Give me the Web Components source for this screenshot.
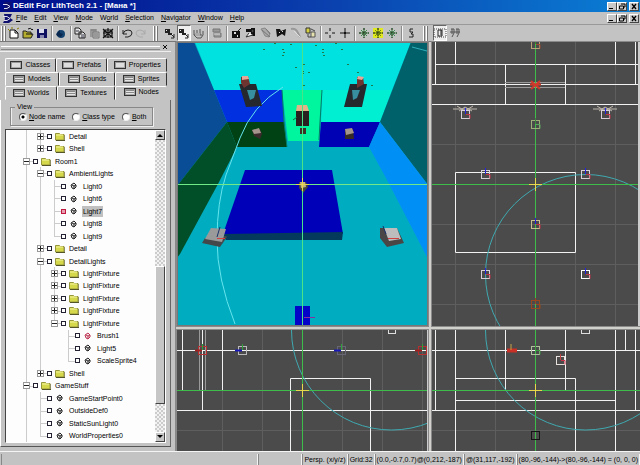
<!DOCTYPE html>
<html lang="en">
<head>
<meta charset="utf-8">
<title>DEdit For LithTech 2.1</title>
<style>
html,body{margin:0;height:100%}
body{font:7px/10px "Liberation Sans",Arial,sans-serif;color:#000;background:#c3c3c3;overflow:hidden}
</style>
</head>
<body>
<dedit-app></dedit-app>
<script>
const BASE = `:host,*{box-sizing:border-box}button{font:inherit;color:inherit;margin:0;padding:0;border:0;background:none}u{text-underline-offset:1px}svg{display:block}`;
function define(name, render) {
  customElements.define(name, class extends HTMLElement {
    constructor() { super(); this.attachShadow({ mode: 'open' }); }
    connectedCallback() { this.shadowRoot.innerHTML = render(this); }
  });
}
const RAISED = 'border:1px solid;border-color:#fff #444 #444 #fff;';
const LOGO = `<svg width="10" height="9" viewBox="0 0 10 9"><path fill="#10106e" d="M1 0h8L7 4l3 2-4 3H0l2-4z"/><path stroke="#dde" d="M0 2.500h4l3 2-3 2H1" fill="none"/></svg>`;

define('window-buttons', () => `<style>${BASE}
:host{display:flex;margin-left:auto}
button{width:10px;height:9px;background:#c8c8c8;${RAISED}display:grid;place-items:center}
button:last-child{margin-left:2px}</style>
<button aria-label="Minimize"><svg width="8" height="7"><path d="M1 5.500h4" stroke="#000"/></svg></button>
<button aria-label="Restore"><svg width="8" height="7"><path d="M3 1h4v3H6M1.500 3h4v3h-4z" fill="none" stroke="#000"/></svg></button>
<button aria-label="Close"><svg width="8" height="7"><path d="M2 1l4 5M6 1L2 6" stroke="#000" stroke-width="1.300"/></svg></button>`);

define('title-bar', () => `<style>${BASE}
:host{display:flex;align-items:center;height:12px;padding:0 1px 0 3px;background:linear-gradient(90deg,#000d8c,#0a3fae 50%,#0a7fd4);color:#fff;font-weight:bold}
h1{font:bold 8px/12px "Liberation Sans",Arial,sans-serif;margin:0;white-space:nowrap}</style>
${LOGO}<h1><slot></slot></h1><window-buttons></window-buttons>`);

define('menu-bar', () => `<style>${BASE}
:host{display:flex;align-items:center;height:13px;padding:0 1px 0 3px;border-bottom:1px solid #999}
nav{display:flex;gap:7px;margin-left:3px}</style>${LOGO}
<nav>${['_File','_Edit','_View','_Mode','W_orld','_Selection','_Navigator','_Window','_Help'].map(t => `<button>${t.replace(/_(.)/, '<u>$1</u>')}</button>`).join('')}</nav>
<window-buttons></window-buttons>`);

const star = c => `<path d="M7 2v10M2 7h10M4 4l6 6M10 4l-6 6" stroke="${c}"/><path d="M7 2v10M2 7h10" stroke="#243018" stroke-dasharray="2 1"/>`;
const ICONS = {
  new: '<path d="M3 4h5l3 3v5H3z" fill="#fff" stroke="#111"/><path d="M8 4v3h3" fill="none" stroke="#111"/><path d="M1 3l2 2M5 1v2M10 3l2-1" stroke="#887c00"/>',
  open: '<path d="M2 12V5h3l1 1h4v2h2l-2 4z" fill="#b5ad30" stroke="#222"/><path d="M7 3q3-2 4 1l1-1M5 8h6" fill="none" stroke="#111"/>',
  save: '<path d="M2 3h10v9H2z" fill="#101060"/><path d="M4 3h5v4H4z" fill="#d9dbe8"/><path d="M5 9h4v3H5z" fill="#8888b0"/>',
  world: '<circle cx="7" cy="8" r="4" fill="#164470"/><path d="M2 8l4-4v3l3 1-2 3-4-1z" fill="#092850"/>',
  copy: '<path d="M2 2h4l2 2v4H2zM6 6h4l2 2v4H6z" fill="#e4e4e4" stroke="#222"/><path d="M3 5h3M8 9h3M8 11h3" stroke="#334"/>',
  paste: '<path d="M3 3h7v8H3z" fill="#999"/><path d="M6 6h6v6H6z" fill="#bbb" stroke="#777"/><path d="M7 8h4M7 10h4M4 4h5" stroke="#777"/>',
  del: '<path d="M2 3l10 9M12 3L2 12M7 2v10M2 7h10M3 4h8v7H3z" stroke="#111" stroke-width="1.200" fill="none"/>',
  undo: '<path d="M3 4v4h4M3 8q1-4 5-4t4 3-4 4H5" fill="none" stroke="#222"/>',
  redo: '<path d="M11 4v4H7M11 8q-1-4-5-4t-4 3 4 4h3" fill="none" stroke="#aaa"/>',
  pick: '<path d="M2 3h5v4H2zM5 7h4v2H5z" fill="#222"/><path d="M3 4h1v1H3zM9 8h1v1H9z" fill="#eee"/><path d="M7 7l4 4M11 8v4H8" stroke="#222" fill="none"/>',
  vertex: '<path d="M3 4v5l3 3h4l2-3V5M6 4v5M9 3v6M3 9h8" stroke="#555" fill="none"/><path d="M4 7h5v3H4z" fill="#aaa"/>',
  gray: '<path d="M3 3h7v3H3zM4 7h7v4H4z" fill="#999" stroke="#777"/><path d="M4 8h6" stroke="#ddd"/>',
  camera: '<path d="M3 5h8v7H3z" fill="#111"/><path d="M5 6h2v2H5zM8 9h1v2H8z" fill="#ddd"/><path d="M9 5l3-3" stroke="#222"/>',
  cube: '<path d="M2 3h5v3H2zM7 2h4v8H7z" fill="#111"/><path d="M5 7l-3 4 7-2M8 4h1v2H8z" fill="#fff" stroke="#333"/>',
  ghost: '<path d="M2 3l4-1 5 5-1 4-4-1-2-4z" fill="#aaa" stroke="#888"/><path d="M3 4l8 7M7 3l4 5" stroke="#777"/>',
  flip: '<path d="M2 3h4l1 2 5-2-1 7-3-2-5 3z" fill="#151515"/><path d="M5 6h1v1H5zM8 5h1v1H8z" fill="#ddd"/>',
  link: '<path d="M2 3q5-1 7 4l2 4" fill="none" stroke="#999" stroke-width="2"/><path d="M5 5l6 6" stroke="#ddd"/>',
  group: '<path d="M2 2h4v5H2z" fill="#d5d040" stroke="#333"/><path d="M7 6h4v5H7z" fill="#e5e2b0" stroke="#555"/><path d="M7 3l4 2M4 8v3h3" stroke="#444" fill="none"/>',
  cross: '<path d="M7 2v3M7 9v3M2 7h3M9 7h3" stroke="#111"/>',
  plus: '<path d="M7 2v10M2 7h10" stroke="#111"/><path d="M6 6h2v2H6z" fill="#111"/>',
  star1: star('#3c8c50'),
  star2: '<path d="M2 2h10v10H2z" fill="#e0e820"/>' + star('#718a10'),
  star3: star('#429558'),
  bolt: '<path d="M9 3H6v3h3L7 8h2v3H5" stroke="#222" fill="none"/>',
  gridA: '<path d="M1 3h12v8H1z" fill="none" stroke="#444" stroke-dasharray="1 1"/><path d="M5 4h4v6H5z" fill="none" stroke="#222"/><path d="M8 4v5" stroke="#222"/>',
  gridB: '<path d="M3 3h3v4l-2 4M8 3h3v4l-2 4M2 6h10M4 3v5M9 3v5" fill="none" stroke="#555"/>'
};
define('tool-button', el => `<style>${BASE}
:host{display:block}
button{display:grid;place-items:center;width:14px;height:16px}
button.on{background:#eee;border:1px solid;border-color:#666 #fff #fff #666}
svg{overflow:visible;flex:none}</style>
<button class="${el.hasAttribute('on') ? 'on' : ''}" aria-label="${el.getAttribute('icon')}"><svg width="12" height="12" viewBox="1 1 12 12">${ICONS[el.getAttribute('icon')]}</svg></button>`);
define('tool-sep', () => `<style>${BASE}:host{display:block;width:2px;height:15px;margin:0 1px 0 2px;border-left:1px solid #8b8b8b;border-right:1px solid #f5f5f5}</style>`);
define('tool-grip', () => `<style>${BASE}:host{display:flex;gap:1px;padding:0 2px}i{width:2px;height:15px;border-left:1px solid #fff;border-right:1px solid #777}</style><i></i><i></i>`);
define('tool-group', () => `<style>:host{display:flex;align-items:center}:host([wide]){gap:1px}</style><slot></slot>`);
define('tool-bar', () => {
  const g = (names, wide = '') => `<tool-group ${wide}>${names.split(' ').map(n => `<tool-button icon="${n.replace('*', '')}" ${n.includes('*') ? 'on' : ''}></tool-button>`).join('')}</tool-group>`;
  const s = '<tool-sep></tool-sep>', r = '<tool-grip></tool-grip>';
  return `<style>${BASE}:host{display:flex;align-items:center;height:17px;padding-left:1px;border-bottom:1px solid #777}
tool-grip{margin:0 3px}tool-grip:first-of-type{margin:0 -1px 0 -2px}</style>
${r}${g('new open save')}${s}${g('world')}${s}${g('copy paste del')}${s}${g('undo redo')}${r}${g('pick pick* vertex')}${s}${g('gray')}${s}${g('camera cube ghost flip link group', 'wide')}${s}${g('cross plus', 'wide')}${s}${g('star1 star2 star3')}${s}${g('bolt')}${r}${g('gridA* gridB', 'wide')}`;
});

define('panel-tab', el => `<style>${BASE}
:host{display:flex;flex-basis:0}
button{flex:1;display:flex;align-items:center;justify-content:center;gap:3px;height:14px;border:1px solid;border-color:#fff #333 transparent #fff;border-radius:2px 2px 0 0}
:host([selected]) button{padding-bottom:2px;border-right-color:transparent}
i{width:12px;height:8px;border:1px solid #333;background:#ddd;box-shadow:inset 1px 1px #999,inset -1px -1px #aaa}
i.lines{background:repeating-linear-gradient(#e5e5e5 0 1px,#888 1px 2px)}</style>
<button role="tab" aria-selected="${el.hasAttribute('selected')}"><i class="${el.hasAttribute('lines') ? 'lines' : ''}"></i><span><slot></slot></span></button>`);

define('tree-row', el => {
  const lvl = +el.getAttribute('level'), kind = el.getAttribute('kind'), guides = el.getAttribute('guides');
  let cols = '';
  for (let i = 0; i < lvl; i++) {
    const last = i === lvl - 1;
    const box = last && kind !== 'leaf' ? `<b>${kind === 'open' ? '' : '<s></s>'}</b>` : '';
    cols += `<i class="${guides[i] === '|' ? 'v' : guides[i] === 'L' ? 'v half' : ''} ${last ? 'h' : ''}">${box}</i>`;
  }
  const hot = el.hasAttribute('hot') ? '#c03050' : '#222';
  const icon = kind === 'leaf'
    ? `<svg width="8" height="8" viewBox="0 0 8 8"><path d="M1 3l3-2 2 2v2L4 7 2 6z" fill="#eee" stroke="${hot}"/><path d="M2 3l2 1 2-1M4 4v3" stroke="${hot}" fill="none"/></svg>`
    : `<svg width="10" height="9" viewBox="0 0 10 9"><path d="M.5 8V1.500h4l1 1h3.500V8z" fill="#d5d84b" stroke="#96963a"/><path d="M1 8.500h9V3" fill="none" stroke="#55552a"/><path d="M1 3h7" stroke="#f4f5a0"/></svg>`;
  return `<style>${BASE}
:host{display:flex;align-items:center;min-height:0;white-space:nowrap}
i{width:14px;align-self:stretch;display:grid;place-items:center;background-repeat:no-repeat}
.v{background-image:linear-gradient(#ccc,#ccc);background-size:1px 100%;background-position:7px 0}
.half{background-size:1px 50%}
.h{background-image:linear-gradient(#ccc,#ccc),linear-gradient(#ccc,#ccc);background-size:1px 100%,7px 1px;background-position:7px 0,7px 6px}
.h.half{background-size:1px 50%,7px 1px}
b{width:7px;height:7px;border:1px solid #999;background:linear-gradient(#222,#222) center/5px 1px no-repeat #fff;display:grid;place-items:center}
s{width:1px;height:5px;background:#222}
input{appearance:none;margin:0 ${kind === 'leaf' ? 4 : 3}px 0 0;width:5px;height:5px;border:1px solid ${el.hasAttribute('sel') ? '#c01840' : '#223'};background:${el.hasAttribute('sel') ? '#e8a0b0' : '#fff'}}
label{display:flex;align-items:center}
span{margin-left:${kind === 'leaf' ? 4 : 3}px;padding:0 1px;line-height:11px}
:host([sel]) span{background:#c0c0c0}</style>
${cols}<label><input type="checkbox">${icon}<span><slot></slot></span></label>`;
});

/* level, kind, guide columns (| through, L last child, space none), label, flags */
const ROWS = [
  [2,'shut','||','Detail'],[2,'shut','|L','Shell'],[1,'open','|','Room1'],[2,'open','||','AmbientLights'],
  [3,'leaf','|||','Light0'],[3,'leaf','|||','Light6'],[3,'leaf','|||','Light7','sel'],[3,'leaf','|||','Light8'],[3,'leaf','||L','Light9'],
  [2,'shut','||','Detail'],[2,'open','||','DetailLights'],
  [3,'shut','|||','LightFixture'],[3,'shut','|||','LightFixture'],[3,'shut','|||','LightFixture'],[3,'shut','|||','LightFixture'],[3,'open','||L','LightFixture'],
  [4,'leaf','|| |','Brush1','hot'],[4,'leaf','|| |','Light5'],[4,'leaf','|| L','ScaleSprite4'],
  [2,'shut','|L','Shell'],[1,'open','|','GameStuff'],
  [2,'leaf','||','GameStartPoint0'],[2,'leaf','||','OutsideDef0'],[2,'leaf','||','StaticSunLight0'],[2,'leaf','|L','WorldProperties0']
];
define('node-tree', () => `<style>${BASE}
:host{display:flex;min-height:0;border:1px solid;border-color:#444 #fff #fff #444;background:#fdfdfd}
.rows{flex:1;display:grid;grid-auto-rows:minmax(0,1fr);padding-left:13px;min-width:0;overflow:hidden}
.bar{width:10px;display:flex;flex-direction:column;background:repeating-conic-gradient(#ccc 0 25%,#f2f2f2 0 50%) 0 0/4px 4px}
.bar button{height:10px;background:#c6c6c6;${RAISED}display:grid;place-items:center}
.thumb{flex:138;background:#c6c6c6;${RAISED}}</style>
<div class="rows">${ROWS.map(([l, k, g, t, f]) => `<tree-row level="${l}" kind="${k}" guides="${g}" ${f || ''}>${t}</tree-row>`).join('')}</div>
<div class="bar"><button aria-label="Scroll up"><svg width="6" height="4"><path d="M0 4l3-3 3 3z"/></svg></button><span style="flex:127"></span><div class="thumb"></div><span style="flex:28"></span><button aria-label="Scroll down"><svg width="6" height="4"><path d="M0 0l3 3 3-3z"/></svg></button></div>`);

define('view-options', () => `<style>${BASE}
:host{display:block}
fieldset{margin:0;padding:0 6px 0 8px;height:23px;display:flex;gap:7px;border:1px solid #888;box-shadow:inset 1px 0 #eee,1px 1px #eee}
legend{padding:0 2px;line-height:8px;margin-left:-4px}
label{display:flex;align-items:center;gap:2px;height:12px;white-space:nowrap}
input{appearance:none;margin:0;width:8px;height:8px;border-radius:50%;border:1px solid;border-color:#555 #eee #eee #555;background:#fff}
input:checked{background:radial-gradient(circle,#000 0 1px,#fff 2px)}</style>
<fieldset><legend>View</legend>
<label><input type="radio" name="v" checked><span><u>N</u>ode name</span></label>
<label><input type="radio" name="v"><span><u>C</u>lass type</span></label>
<label><input type="radio" name="v"><span><u>B</u>oth</span></label></fieldset>`);

define('side-panel', () => `<style>${BASE}
:host{display:flex;flex-direction:column;min-height:0;padding:2px 4px 4px 0;border-right:1px solid #888;background:#c3c3c3}
.head{display:flex;align-items:center;gap:2px;height:7px;padding:0 3px 0 1px}
.head div{flex:1;height:4px;border-top:1px solid #fff;border-bottom:1px solid #888}
.head button{display:grid;place-items:center;width:6px;height:6px}
.tabs{padding:6px 4px 0 5px;border-top:1px solid #eee}
.row{display:flex}
.page{flex:1;min-height:0;display:flex;flex-direction:column;padding:3px 4px 3px 4px;border-left:1px solid #fff;border-right:1px solid #666;border-bottom:1px solid #555}
view-options{margin:0 22px 3px 5px}
node-tree{flex:1}</style>
<div class="head"><div></div><button aria-label="Close panel"><svg width="5" height="5"><path d="M0 0l4 4M4 0L0 4" stroke="#111"/></svg></button></div>
<div class="tabs" role="tablist">
<div class="row"><panel-tab style="flex-grow:51">Classes</panel-tab><panel-tab style="flex-grow:52">Prefabs</panel-tab><panel-tab style="flex-grow:60">Properties</panel-tab></div>
<div class="row"><panel-tab lines style="flex-grow:54">Models</panel-tab><panel-tab lines style="flex-grow:57">Sounds</panel-tab><panel-tab lines style="flex-grow:52">Sprites</panel-tab></div>
<div class="row"><panel-tab lines style="flex-grow:52">Worlds</panel-tab><panel-tab lines style="flex-grow:59">Textures</panel-tab><panel-tab lines selected style="flex-grow:52">Nodes</panel-tab></div></div>
<div class="page"><view-options></view-options><node-tree></node-tree></div>`);

const poly = (p, f) => `<polygon points="${p}" fill="${f}"/>`;
const path = (d, c, w = 1) => `<path d="${d}" stroke="${c}" stroke-width="${w}" fill="none"/>`;
const G = '#3ebd4b', W = '#f2f2f2', C = '#3fa9b0', F = '#5e5e5e';
/* object marker: a square with coloured axis ticks */
const mark = (x, y, c = '#d8d0d8', v = '#2222e0', h = '#c83048') =>
  `<rect x="${x - 3.5}" y="${y - 3.5}" width="8" height="8" fill="none" stroke="${c}"/>` + path(`M${x + .5} ${y}v-6`, v) + path(`M${x + 1} ${y + .5}h4v4`, h);
const side = (x, y, c = '#bbb', b = '#1818b8') => `<rect x="${x - 3.5}" y="${y - 3.5}" width="8" height="8" fill="none" stroke="${c}"/>` + path(`M${x} ${y + .5}h-7`, b, 2) + path(`M${x + .5} ${y}v-6`, '#2da23a');
const aim = (x, y) => path(`M${x - 6} ${y + .5}h13M${x + .5} ${y - 6}v13`, '#e8d84c');
const SCENES = {
  persp: ['177 42 251 284',
    `<rect x="177" y="42" width="251" height="284" fill="#00adc0"/>` +
    poly('195,42 411,42 392,90 214,90', '#00e2df') + poly('177,42 194,42 214,90 227,122 177,186', '#084d95') +
    poly('227,122 237,147 218,184 180,254 177,258 177,186', '#004f28') +
    poly('214,90 282,90 284,122 227,122', '#0030df') + poly('227,122 284,122 287,147 237,147', '#004213') +
    poly('282,90 322,90 319,141 288,141', '#00f59f') + poly('322,90 392,90 380,122 321,122', '#00efd3') +
    poly('321,122 380,122 369,147 319,147', '#0000b5') + poly('411,42 428,42 428,185 380,122', '#00616b') +
    poly('380,122 428,185 428,259 387,180 369,147', '#0090f5') +
    path('M282 90l2 32 3 25M322 90l-2 32-1 18', '#007d68') +
    poly('245,170 332,170 343,234 223,234', '#0000b8') + poly('223,234 343,232 342,240 226,240', '#043a5c') +
    path('M283 87Q252 106 240 138L226 175Q217 202 217 240T235 324', '#66e4ee') + path('M412 47l15 4', '#30b0bb') +
    poly('239,84 256,84 262,106 246,107', '#25282c') + poly('241,77 248,76 250,84 244,88 241,83', '#6d3430') + poly('242,76 248,76 249,79 242,80', '#e6a798') + poly('247,90 256,90 254,98 250,100', '#378e9e') +
    poly('350,84 367,84 362,107 344,107', '#25282c') + poly('357,77 363,77 364,84 357,88', '#6d3430') + poly('358,76 364,77 362,80 357,79', '#e6a798') + poly('352,90 360,90 357,98 353,100', '#378e9e') +
    poly('297,105 307,105 309,111 296,111', '#e3b488') + poly('296,111 309,111 309,126 296,126', '#29211f') + poly('300,128 306,128 306,134 300,134', '#3b3326') + path('M293 120l4-3', '#164') +
    poly('252,130 260,129 262,134 260,139 254,136', '#3b2a2c') + poly('252,130 259,128 261,133 254,134', '#a3948c') +
    poly('345,129 353,129 354,139 345,139', '#372b26') + poly('345,129 352,128 354,133 346,135', '#a3948c') +
    poly('202,243 205,238 226,236 227,237 220,247', '#44484a') + poly('205,239 211,228 226,229 222,242', '#9a9a9a') + path('M217 238.500h8', '#d04040') + path('M217 237l3-10', '#18306b') +
    poly('380,228 397,228 404,243 387,247 380,238', '#4a4646') + poly('384,228 397,228 401,239 389,241', '#bdbdbd') + path('M388 238.500h11', '#d04040') + path('M386 234l-3-8', '#18306b') +
    `<rect x="295" y="306" width="15" height="20" fill="#0404c8"/>` + path('M304 317.500h11', '#8a2ea0') +
    poly('299,182 306,182 308,187 303,193 299,188', '#4b4a38') + poly('300,182 305,182 306,187 301,188', '#c8b480') +
    [[263,49],[274,43],[282,49],[283,52],[282,55],[322,49],[322,52],[323,55],[335,43],[341,49],[303,64],[295,67],[302,71],[308,72],[302,73],[303,85],[347,64],[357,72],[371,85],[290,44],[315,45]].map(([x, y]) => `<rect x="${x}" y="${y}" width="2" height="1" fill="#1b7a4a"/>`).join('') +
    path('M177 184.500h251', '#70ea88') + path('M302.500 42v284', '#4be388') + aim(302, 184) + path('M177.500 42v284M427.500 42v284M177 42.500h251M177 325.500h251', '#777')],
  top: ['432 42 208 284',
    path('M455.500 42v284M495.500 42v284M575.500 42v284M615.500 42v284M432 144.500h208M432 224.500h208M432 264.500h208M432 304.500h208', F) +
    path('M435.500 42v42M455.500 42v22M615.500 42v22M635.500 42v42M435 64.500h203M432 84.500h206M432 104.500h206M505.500 64v40M565.500 64v40M455.500 172.500h120v80h-120z', W) +
    path('M505 82.500h60M505 87.500h60', '#999') + `<circle cx="585.500" cy="274.500" r="100" fill="none" stroke="${C}"/>` +
    path('M432 184.500h208', G) + path('M535.500 42v284', G) +
    path('M453 109h24M457 106l8 5 8-5M459 111l6-4 7 4M593 109h24M597 106l8 5 8-5M599 111l6-4 7 4', '#c0b8ae') +
    mark(535,44,'#b8a478','#378e2a','#a04a30') + mark(465,114) + mark(605,114) + mark(535,124,'#9cae7a','#3a8a3e','#5da65d') + mark(485,174) + mark(585,174) + mark(535,224,'#c8c090') + mark(485,274) + mark(585,274,'#fff') + mark(535,304,'#99481f','#99481f','#99481f') +
    path('M531 81l9 8M540 81l-9 8M530 84.500h11', '#d03a2a', 2) + aim(535, 184) + path('M639 42v284', '#ccc', 2)],
  front: ['177 330 251 121',
    path('M222.500 330v121M262.500 330v121M342.500 330v121M382.500 330v121M422.500 330v121M177 430.500h251', F) +
    path('M182.500 330v60M202.500 330v80M222.500 330v60M177 350.500h251M177 410.500h251M290.500 451v-72.500h80V451', W) +
    path('M199.500 330v60M205.500 330v60', '#999') + `<circle cx="391.500" cy="330" r="100" fill="none" stroke="${C}"/>` +
    path('M177 390.500h251M302.500 330v121', G) + side(202,350,'#b43030','#a02020') + side(242,350) + side(341,350,'#667') + side(422,350,'#b43030','#a02020') +
    `<rect x="388.500" y="324.500" width="7" height="9" fill="none" stroke="#ddd"/>` + aim(302, 390) + path('M427.500 330v121', '#ccc', 1)],
  right: ['432 330 208 121',
    path('M495.500 330v121M432 430.500h208', F) +
    path('M435.500 330v80M455.500 330v121M505.500 330v60M565.500 330v60M455 378.500h120.500V451M615.500 330v121M625.500 330v20M635.500 330v80M432 350.500h208M455 400.500h160M432 410.500h208', W) +
    `<circle cx="585.500" cy="330" r="100" fill="none" stroke="${C}"/>` + path('M432 390.500h208M535.500 330v121', G) +
    path('M507 350.500h10', '#c83026', 4) + path('M511 344v6', '#c8a040') + mark(535,350,'#aec09c','#3a9a3e','#3a9a3e') + mark(560,360,'#e8e0dc','#c04040') +
    `<rect x="581.500" y="324.500" width="8" height="9" fill="none" stroke="#ddd"/><rect x="531.500" y="431.500" width="8" height="8" fill="none" stroke="#151515"/>` + aim(535, 390)]
};
define('view-port', el => {
  const [box, body] = SCENES[el.getAttribute('scene')];
  return `<style>:host{display:block;min-width:0;min-height:0;overflow:hidden;background:#4b4b4b;box-shadow:0 0 0 1px #8a8a8a}svg{display:block;width:100%;height:100%}</style>
<svg viewBox="${box}" preserveAspectRatio="xMidYMid slice" role="img" aria-label="${el.getAttribute('scene')} view">${body}</svg>`;
});

define('status-bar', () => `<style>${BASE}:host{display:flex;justify-content:flex-end;align-items:center;height:14px;gap:2px;padding:1px 1px 0 2px;border-top:1px solid #f4f4f4}
span{padding:0 1px;line-height:11px;height:11px;white-space:nowrap;box-shadow:-1px 0 #888,1px 0 #f4f4f4}
.wide{flex:270}.mid{flex:43}</style>
<span class="wide"></span><span class="mid"></span><span>Persp. (x/y/z)</span><span>Grid:32</span><span>(0.0,-0.7,0.7)@(0,212,-187)</span><span>@(31,117,-192)</span><span>(80,-96,-144)-&gt;(80,-96,-144) = (0, 0, 0)</span>`);

define('dedit-app', () => `<style>
:host{display:flex;flex-direction:column;height:100vh;background:#c3c3c3}
main{flex:1;min-height:0;display:grid;grid-template:minmax(0,1fr)/176px minmax(0,1fr)}
.views{display:grid;grid-template:minmax(0,284fr) minmax(0,121fr)/minmax(0,251fr) minmax(0,208fr);gap:4px;padding-left:1px;background:#d2d0cc;min-height:0}</style>
<title-bar>DEdit For LithTech 2.1 - [Мана *]</title-bar><menu-bar></menu-bar><tool-bar></tool-bar>
<main><side-panel></side-panel><div class="views"><view-port scene="persp"></view-port><view-port scene="top"></view-port><view-port scene="front"></view-port><view-port scene="right"></view-port></div></main>
<status-bar></status-bar>`);
</script>
</body>
</html>
